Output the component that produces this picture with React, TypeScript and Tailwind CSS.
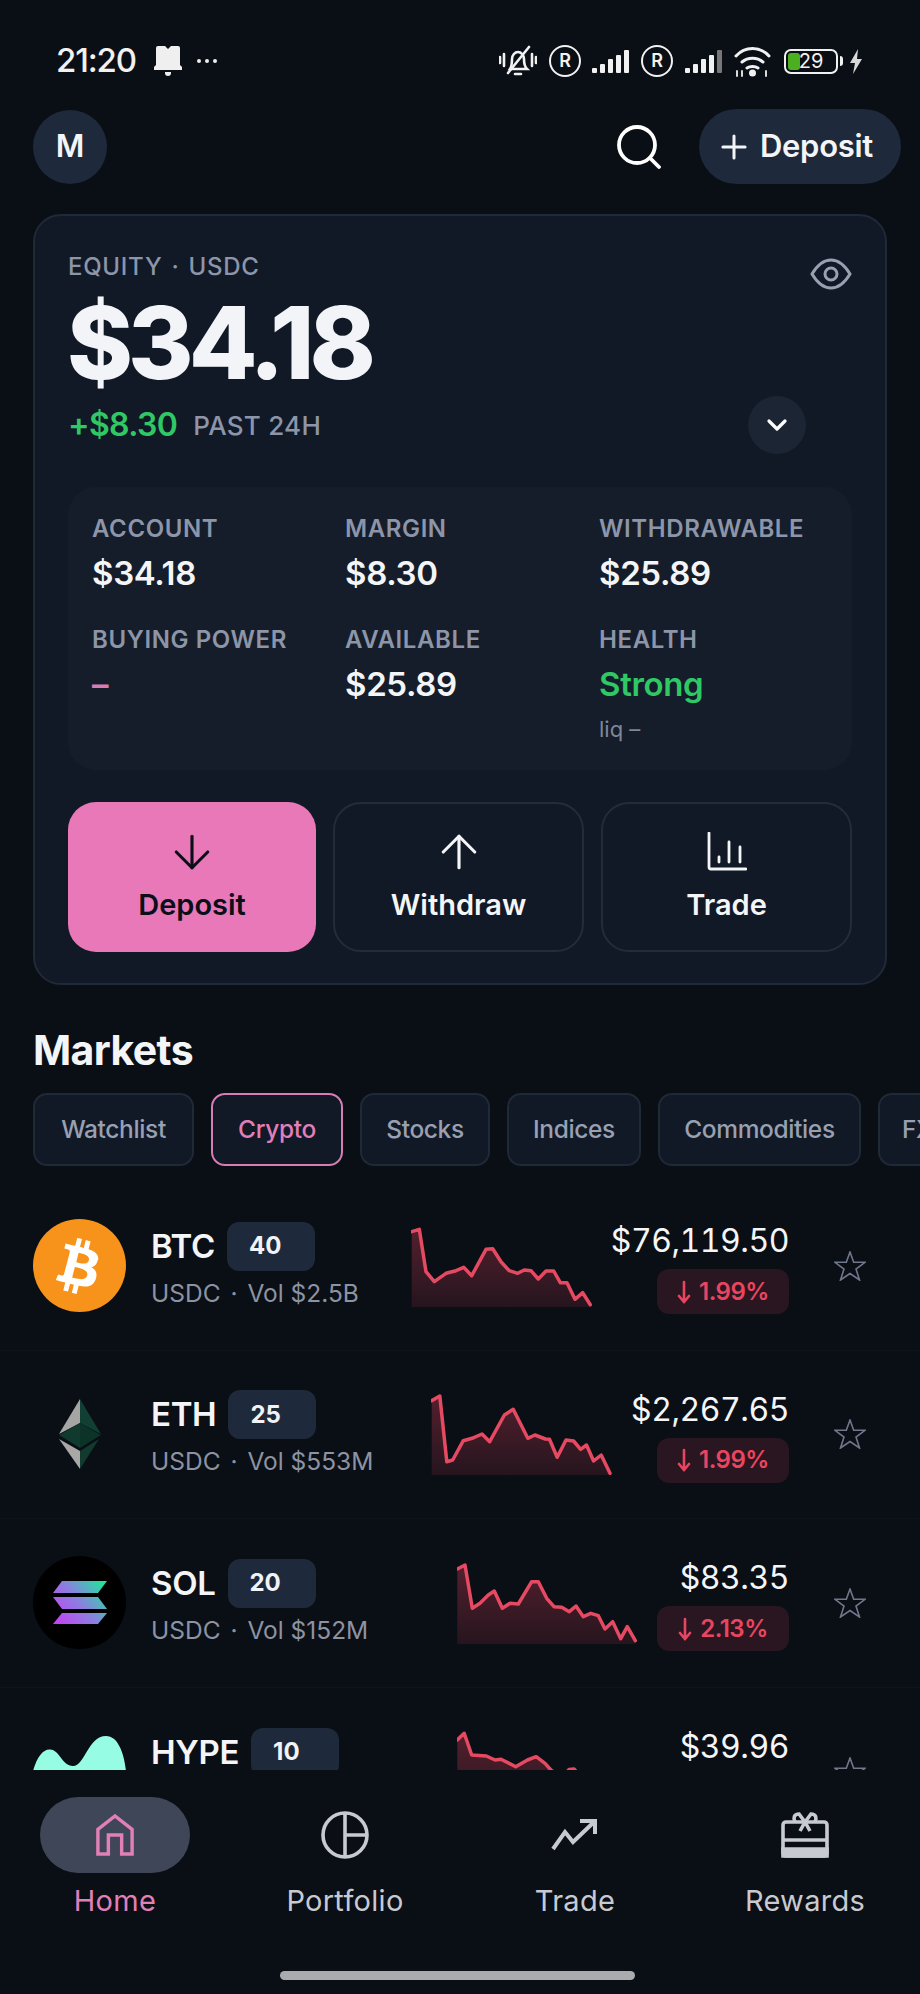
import React from "react";
import { ArrowDown, ArrowUp, ChevronDown, Plus } from "lucide-react";

const BTC_LINE = "0.7,9.7 8.3,7.3 15,49.7 23.3,59.7 35,51.3 45,48.7 52.7,45.3 60.7,53.7 75,27.3 81.7,26.7 90,39.7 98.3,48.7 106.7,51.3 113.3,48 120,48.7 127.3,57 135,49 142.7,49 149.3,60.7 156,60.7 164,77.3 171.7,70.7 179.3,82.7";
const ETH_LINE = "0.7,10.7 8.8,6 15.8,71.7 21.7,70 32.3,50.7 41.1,48.3 51,44 58.7,51.7 73.4,25 82.2,19.3 96.8,48.3 103.9,45 114.4,49 118.5,49.3 126.2,67.3 135,50 142.6,51 149.6,59.3 155.5,55 162.6,71 170.2,65 179,83.3";
const SOL_LINE = "0.3,10 8,6 15.3,49.3 23,44.3 31.3,36 37.3,32 45.3,49.3 53,44.3 61.3,45 74.7,22.7 81.3,22.7 89.7,39.3 97,47.7 104.7,48.3 112.3,52.7 119,47 126.3,57.7 133.7,54.3 141.3,56.7 148,70 155.7,62.7 163.7,79.7 170.3,67.7 178.3,81.7";
const HYPE_LINE = "0.3,12 7.2,5.3 14.7,27 29.3,28 38.1,32 44,31.3 58.7,38.7 70.4,32 79.2,28.7 88,35.3 93.9,42 105,50 112,41.5 117,41 125,50 178,80";

const markets = [
  { sym: "BTC", lev: "40", vol: "Vol $2.5B", price: "$76,119.50", pct: "1.99%", line: BTC_LINE },
  { sym: "ETH", lev: "25", vol: "Vol $553M", price: "$2,267.65", pct: "1.99%", line: ETH_LINE },
  { sym: "SOL", lev: "20", vol: "Vol $152M", price: "$83.35", pct: "2.13%", line: SOL_LINE },
  { sym: "HYPE", lev: "10", vol: "Vol $41M", price: "$39.96", pct: "1.20%", line: HYPE_LINE },
];

const stats = [
  { label: "ACCOUNT", value: "$34.18" },
  { label: "MARGIN", value: "$8.30" },
  { label: "WITHDRAWABLE", value: "$25.89" },
  { label: "BUYING POWER", value: "–", pink: true },
  { label: "AVAILABLE", value: "$25.89" },
  { label: "HEALTH", value: "Strong", green: true, sub: "liq –" },
];

const tabs = [
  { name: "Watchlist", w: "w-[161px]" },
  { name: "Crypto", w: "w-[132px]" },
  { name: "Stocks", w: "w-[130px]" },
  { name: "Indices", w: "w-[134px]" },
  { name: "Commodities", w: "w-[203px]" },
  { name: "FX", w: "w-[100px]" },
];

function CoinIcon({ sym }: { sym: string }) {
  if (sym === "BTC") {
    return (
      <div className="w-[93px] h-[93px] rounded-full bg-[#f7931a] flex items-center justify-center shrink-0">
        <svg viewBox="0 0 24 24" className="w-[82px] h-[82px]" fill="#fff">
          <path d="M17.3 10.3c.3-1.7-1-2.6-2.8-3.2l.6-2.3-1.4-.4-.6 2.3-1.1-.3.6-2.3-1.4-.3-.6 2.3-.9-.2-1.9-.5-.4 1.5s1 .2 1 .3c.6.1.7.5.6.8l-.7 2.7-1 3.7c-.1.2-.3.5-.7.4 0 0-1-.3-1-.3l-.7 1.6 1.8.5 1 .2-.6 2.4 1.4.3.6-2.3 1.1.3-.6 2.3 1.4.4.6-2.4c2.4.5 4.2.3 5-1.9.6-1.8 0-2.8-1.3-3.5.9-.2 1.7-.9 1.9-2.2zm-3.2 4.5c-.4 1.8-3.4.8-4.4.6l.8-3.1c1 .2 4.1.7 3.6 2.5zm.5-4.5c-.4 1.6-2.9.8-3.7.6l.7-2.8c.8.2 3.4.6 3 2.2z" />
        </svg>
      </div>
    );
  }
  if (sym === "ETH") {
    return (
      <div className="w-[93px] h-[93px] flex items-center justify-center shrink-0">
        <svg viewBox="0 0 42 70" className="w-[42px] h-[70px]">
          <polygon points="21,0 21,24 0,35" fill="#a5a5a3" />
          <polygon points="21,0 42,35 21,24" fill="#123f33" />
          <polygon points="0,36 21,24 21,49" fill="#103a2e" />
          <polygon points="42,36 21,24 21,49" fill="#0d3228" />
          <polygon points="0,40 21,52 21,70" fill="#a8a8a6" />
          <polygon points="40,40 21,52 21,70" fill="#123a2f" />
        </svg>
      </div>
    );
  }
  if (sym === "SOL") {
    return (
      <div className="w-[93px] h-[93px] rounded-full bg-black flex items-center justify-center shrink-0">
        <svg viewBox="0 0 54 43" className="w-[54px] h-[43px]">
          <defs>
            <linearGradient id="sol" gradientUnits="userSpaceOnUse" x1="0" y1="43" x2="54" y2="0">
              <stop offset="0" stopColor="#cb3cf5" />
              <stop offset="0.5" stopColor="#8a80e0" />
              <stop offset="1" stopColor="#14f195" />
            </linearGradient>
          </defs>
          <polygon points="9,0 54,0 45,12 0,12" fill="url(#sol)" />
          <polygon points="0,16 45,16 54,28 9,28" fill="url(#sol)" />
          <polygon points="9,32 54,32 45,43 0,43" fill="url(#sol)" />
        </svg>
      </div>
    );
  }
  return (
    <div className="w-[93px] h-[93px] shrink-0">
      <svg viewBox="0 0 93 93" className="w-[93px] h-[93px]">
        <path d="M0 46C4 32 10 24 17 24.5 27 25 29 41 40 41 52 41 55 11 73 11 85 11 91 28 93 46 93 72 72 93 46.5 93 21 93 0 72 0 46Z" fill="#97fce4" />
      </svg>
    </div>
  );
}

function Spark({ line, id }: { line: string; id: string }) {
  const pts = line.split(" ");
  const first = pts[0].split(",")[0];
  const last = pts[pts.length - 1].split(",")[0];
  return (
    <svg viewBox="0 0 184 88" className="w-[184px] h-[88px] shrink-0">
      <defs>
        <linearGradient id={id} x1="0" y1="0" x2="0" y2="1">
          <stop offset="0" stopColor="#ef4661" stopOpacity="0.32" />
          <stop offset="1" stopColor="#ef4661" stopOpacity="0.12" />
        </linearGradient>
      </defs>
      <polygon points={`${first},85 ${line} ${last},85`} fill={`url(#${id})`} />
      <polyline points={line} fill="none" stroke="#e64a62" strokeWidth="3.5" strokeLinejoin="round" strokeLinecap="round" />
    </svg>
  );
}

function MarketRow({ m, last }: { m: (typeof markets)[number]; last: boolean }) {
  return (
    <div className={`flex items-center h-[168.5px] pl-[33px] pr-[54px] ${last ? "" : "border-b border-[#0f141c]"}`}>
      <CoinIcon sym={m.sym} />
      <div className="ml-[25px] flex flex-col">
        <div className="flex items-center">
          <span className="text-[33px] leading-[49px] font-semibold text-[#f4f5f7] tracking-[-0.01em]">{m.sym}</span>
          <span className="ml-[12px] w-[88px] h-[49px] rounded-[12px] bg-[#1e293b] pl-[22px] flex items-center text-[24px] font-bold text-[#f1f3f6]">{m.lev}</span>
        </div>
        <div className="mt-[5px] text-[24.5px] leading-[34px] text-[#8c93a3] whitespace-nowrap">USDC <span className="mx-[3px]">·</span> {m.vol}</div>
      </div>
      <div className="ml-auto"><Spark line={m.line} id={`sp-${m.sym}`} /></div>
      <div className="ml-[16px] pt-[2px] flex flex-col items-end">
        <div className="text-[32px] leading-[44px] font-normal text-[#f4f5f7] tabular-nums tracking-[-0.015em]">{m.price}</div>
        <div className="mt-[6px] w-[132px] h-[45px] rounded-[12px] bg-[#2a1620] flex items-center justify-center text-[24px] font-semibold tracking-[-0.02em] text-[#ea4560]">
          <svg viewBox="0 0 14 24" className="w-[14px] h-[24px] mr-[8px]" fill="none" stroke="currentColor" strokeWidth="2.6" strokeLinecap="round">
            <path d="M7 2v20M2 16l5 6 5-6" />
          </svg>
          <span>{m.pct}</span>
        </div>
      </div>
      <svg viewBox="0 0 32 30" className="ml-[45px] w-[32px] h-[30px] shrink-0" fill="none" stroke="#70778a" strokeWidth="1.6" strokeLinejoin="miter">
        <polygon points="16,1 19.7,11.3 31,11.3 22,18 25.5,29 16,22.5 6.5,29 10,18 1,11.3 12.3,11.3" />
      </svg>
    </div>
  );
}

function Reg({ className }: { className: string }) {
  return (
    <div className={`w-[32px] h-[32px] rounded-full border-[2.5px] border-[#f1f1f1] flex items-center justify-center text-[18px] font-semibold leading-none ${className}`}>R</div>
  );
}

function Bars({ className, dim }: { className: string; dim: boolean }) {
  const hs = [5, 9, 14, 18, 23];
  return (
    <div className={`flex items-end gap-[3px] h-[23px] ${className}`}>
      {hs.map((h, i) => (
        <i key={h} className={`w-[5px] rounded-[1px] ${dim && i === 4 ? "bg-[#777]" : "bg-[#f1f1f1]"}`} style={{ height: h }} />
      ))}
    </div>
  );
}

function StatusBar() {
  return (
    <div className="h-[109px] shrink-0 flex items-center justify-between pl-[56px] pr-[57px] pt-[13px] text-[#f1f1f1]">
      <div className="flex items-center">
        <span className="text-[33px] font-medium tracking-[-0.035em]">21:20</span>
        <svg viewBox="0 0 28 30" className="ml-[18px] w-[28px] h-[30px]" fill="#efefef">
          <path d="M4 0h7l3 3 3-3h7a2 2 0 0 1 2 2v17l2 2v3H0v-3l2-2V2a2 2 0 0 1 2-2z" />
          <path d="M11 26h6v1a3 3 0 0 1-6 0z" />
        </svg>
        <span className="ml-[15px] flex gap-[4px]">
          <i className="w-[4px] h-[4px] rounded-full bg-[#eee]" />
          <i className="w-[4px] h-[4px] rounded-full bg-[#eee]" />
          <i className="w-[4px] h-[4px] rounded-full bg-[#eee]" />
        </span>
      </div>
      <div className="flex items-center">
        <svg viewBox="0 0 38 32" className="w-[38px] h-[32px]" fill="none" stroke="#f1f1f1" strokeWidth="2.6" strokeLinecap="round">
          <path d="M1 12v6M5 9v12M33 9v12M37 12v6" />
          <path d="M11 24c2-3 2-6 2-10 0-4 3-7 6-7s6 3 6 7c0 4 0 7 3 10z" />
          <path d="M16 29h6M9 28 30 2" />
        </svg>
        <Reg className="ml-[12px]" />
        <Bars className="ml-[11px]" dim={false} />
        <Reg className="ml-[12px]" />
        <Bars className="ml-[12px]" dim />
        <svg viewBox="0 0 39 31" className="ml-[11px] w-[39px] h-[31px]" fill="none" stroke="#f1f1f1" strokeWidth="3" strokeLinecap="round">
          <path d="M3 10c9-10 24-10 33 0M9 16c6-5 15-5 21 0M14 22c3-2 8-2 11 0" />
          <circle cx="19.5" cy="27" r="2" fill="#f1f1f1" />
          <path d="M4 25v5M9 25v5M33 25v5" strokeWidth="1.8" />
        </svg>
        <div className="relative ml-[12px] w-[54px] h-[25px] rounded-[7px] border-2 border-[#f1f1f1] overflow-hidden flex items-center justify-center">
          <div className="absolute left-[2px] top-[2px] bottom-[2px] w-[12px] rounded-[3px] bg-[#4caf1f]" />
          <span className="relative text-[20px] leading-none text-[#f1f1f1]">29</span>
        </div>
        <div className="ml-[2px] w-[3px] h-[10px] rounded-r bg-[#f1f1f1]" />
        <svg viewBox="0 0 14 25" className="ml-[6px] w-[14px] h-[25px]" fill="#d8d8d8">
          <path d="M9 0 1 14h5l-2 11 9-15H8z" />
        </svg>
      </div>
    </div>
  );
}

function Actions() {
  return (
    <div className="mt-[32px] flex justify-between h-[150px]">
      <button className="w-[248px] rounded-[28px] bg-[#e878b8] flex flex-col items-center pt-[30px] text-[#0b0f17]">
        <span className="h-[40px] flex items-center justify-center"><ArrowDown size={54} strokeWidth={1.4} /></span>
        <span className="mt-[14px] text-[29px] leading-[38px] font-semibold">Deposit</span>
      </button>
      <button className="w-[251px] rounded-[28px] border-2 border-[#232c3a] flex flex-col items-center pt-[28px] text-[#f4f5f7]">
        <span className="h-[40px] flex items-center justify-center"><ArrowUp size={54} strokeWidth={1.4} /></span>
        <span className="mt-[14px] text-[29px] leading-[38px] font-semibold">Withdraw</span>
      </button>
      <button className="w-[251px] rounded-[28px] border-2 border-[#232c3a] flex flex-col items-center pt-[28px] text-[#f4f5f7]">
        <svg viewBox="0 0 40 40" className="w-[40px] h-[40px]" fill="none" stroke="currentColor" strokeWidth="2.8" strokeLinecap="round">
          <path d="M2 1v34a2 2 0 0 0 2 2h35" />
          <path d="M12 25v5M22 10v20M33 15v15" />
        </svg>
        <span className="mt-[14px] text-[29px] leading-[38px] font-semibold">Trade</span>
      </button>
    </div>
  );
}

function BottomNav() {
  return (
    <div className="flex-1 relative">
      <div className="grid grid-cols-4">
        <div className="flex flex-col items-center">
          <div className="mt-[27px] w-[150px] h-[76px] rounded-[38px] bg-[#3f4657] flex items-center justify-center">
            <svg viewBox="0 0 40 44" className="w-[38px] h-[42px]" fill="none" stroke="#e07fb8" strokeWidth="3.6">
              <path d="M2 42V16L20 2l18 14v26H27V22H13v20z" />
            </svg>
          </div>
          <span className="mt-[9px] text-[29px] leading-[38px] text-[#e07fb8] tracking-[0.01em]">Home</span>
        </div>
        <div className="flex flex-col items-center">
          <div className="mt-[27px] h-[76px] flex items-center justify-center">
            <svg viewBox="0 0 48 48" className="w-[48px] h-[48px]" fill="none" stroke="#c8cad1" strokeWidth="3.6">
              <circle cx="24" cy="24" r="22" />
              <path d="M24 2v44M24 24h22" />
            </svg>
          </div>
          <span className="mt-[9px] text-[29px] leading-[38px] text-[#c8cad1] tracking-[0.01em]">Portfolio</span>
        </div>
        <div className="flex flex-col items-center">
          <div className="mt-[27px] h-[76px] flex items-center justify-center">
            <svg viewBox="0 0 48 32" className="w-[48px] h-[32px]" fill="none" stroke="#c8cad1" strokeWidth="4">
              <path d="M2 30 14 13l8 10L43 3" />
              <path d="M29 2h15v13" />
            </svg>
          </div>
          <span className="mt-[9px] text-[29px] leading-[38px] text-[#c8cad1] tracking-[0.01em]">Trade</span>
        </div>
        <div className="flex flex-col items-center">
          <div className="mt-[27px] h-[76px] flex items-center justify-center">
            <svg viewBox="0 0 48 46" className="w-[48px] h-[46px]" fill="none" stroke="#c8cad1" strokeWidth="3.6">
              <rect x="2" y="10" width="44" height="34" rx="3" />
              <path d="M2 28h44" />
              <path d="M2 37h44v7H2z" fill="#c8cad1" />
              <path d="M24 10 18 2c-5 0-6 4-4 8M24 10l6-8c5 0 6 4 4 8M24 10l-5 9M24 10l5 9" />
            </svg>
          </div>
          <span className="mt-[9px] text-[29px] leading-[38px] text-[#c8cad1] tracking-[0.01em]">Rewards</span>
        </div>
      </div>
      <div className="absolute left-[280px] bottom-[14px] w-[355px] h-[9px] rounded-full bg-[#a9abaf]" />
    </div>
  );
}

export default function App() {
  return (
    <div className="w-[920px] h-[1994px] bg-[#0a0e15] flex flex-col overflow-hidden font-['Inter',sans-serif]">
      <div className="h-[1770px] shrink-0 overflow-hidden">
        <StatusBar />

        <div className="flex items-center justify-between pl-[33px] pr-[19px] h-[75px]">
          <div className="w-[74px] h-[74px] rounded-full bg-[#1e293b] flex items-center justify-center text-[31px] font-semibold text-[#f4f5f7]">M</div>
          <div className="flex items-center">
            <svg viewBox="0 0 44 44" className="w-[44px] h-[44px]" fill="none" stroke="#fff" strokeWidth="3.8" strokeLinecap="round">
              <circle cx="20" cy="20" r="18" />
              <path d="M33 33l9 9" />
            </svg>
            <div className="ml-[38px] w-[202px] h-[75px] rounded-full bg-[#1e293b] flex items-center pl-[16px] text-[#f4f5f7]">
              <Plus size={38} strokeWidth={1.9} />
              <span className="ml-[7px] text-[31px] font-semibold tracking-[-0.01em]">Deposit</span>
            </div>
          </div>
        </div>

        <div className="mx-[33px] mt-[30px] h-[771px] rounded-[28px] border-2 border-[#1f2937] bg-[#111927] px-[33px] pt-[35px]">
          <div className="flex justify-between">
            <div>
              <div className="text-[24px] leading-[32px] font-medium text-[#8d95a8] tracking-[0.03em]">EQUITY <span className="mx-[2px]">·</span> USDC</div>
              <div className="mt-[6px] -ml-[1px] text-[100px] leading-[108px] font-extrabold text-[#f3f4f7] tracking-[-0.05em]">$34.18</div>
            </div>
            <svg viewBox="0 0 42 32" className="w-[42px] h-[32px] mt-[7px]" fill="none" stroke="#98a0b2" strokeWidth="3">
              <path d="M2 16C8 6 14 2 21 2s13 4 19 14c-6 10-12 14-19 14S8 26 2 16Z" />
              <circle cx="21" cy="16" r="6" />
            </svg>
          </div>
          <div className="-mt-[1px] flex items-center h-[58px]">
            <span className="text-[32px] font-semibold text-[#2fc864] tracking-[-0.02em]">+$8.30</span>
            <span className="ml-[16px] text-[26px] font-medium text-[#8d95a8] tracking-[0.01em]">PAST 24H</span>
            <div className="ml-auto mr-[46px] w-[58px] h-[58px] rounded-full bg-[#1c2533] flex items-center justify-center">
              <ChevronDown size={32} strokeWidth={2.4} className="text-white" />
            </div>
          </div>

          <div className="mt-[33px] h-[283px] rounded-[28px] bg-[#151d2b] grid grid-cols-[253px_254px_1fr] pl-[24px] pt-[25px] content-start">
            {stats.map((s) => (
              <div key={s.label} className="h-[111px]">
                <div className="text-[24px] leading-[34px] font-semibold text-[#8d95a8] tracking-[0.025em] whitespace-nowrap">{s.label}</div>
                <div className={`mt-[5px] text-[33px] leading-[44px] font-semibold tracking-[-0.01em] ${s.pink ? "text-[#d77db4] font-bold" : s.green ? "text-[#2fc864]" : "text-[#f4f5f7]"}`}>{s.value}</div>
                {s.sub && <div className="mt-[8px] text-[22px] leading-[30px] text-[#7f8798]">{s.sub}</div>}
              </div>
            ))}
          </div>

          <Actions />
        </div>

        <h2 className="pl-[33px] mt-[40px] text-[41px] leading-[50px] font-bold text-[#f4f5f7] tracking-[-0.015em]">Markets</h2>

        <div className="mt-[18px] pl-[33px] flex gap-[17px] overflow-hidden">
          {tabs.map((t) => (
            <div
              key={t.name}
              className={`h-[73px] shrink-0 ${t.w} ${t.name === "FX" ? "pl-[22px]" : "justify-center"} rounded-[14px] border-2 flex items-center text-[24.5px] font-medium tracking-[-0.015em] bg-[#111927] ${t.name === "Crypto" ? "border-[#d77db4] text-[#e07fb8]" : "border-[#1f2937] text-[#98a0b2]"}`}
            >
              {t.name}
            </div>
          ))}
        </div>

        <div className="mt-[16px]">
          {markets.map((m, i) => (
            <MarketRow key={m.sym} m={m} last={i === markets.length - 1} />
          ))}
        </div>
      </div>

      <BottomNav />
    </div>
  );
}
